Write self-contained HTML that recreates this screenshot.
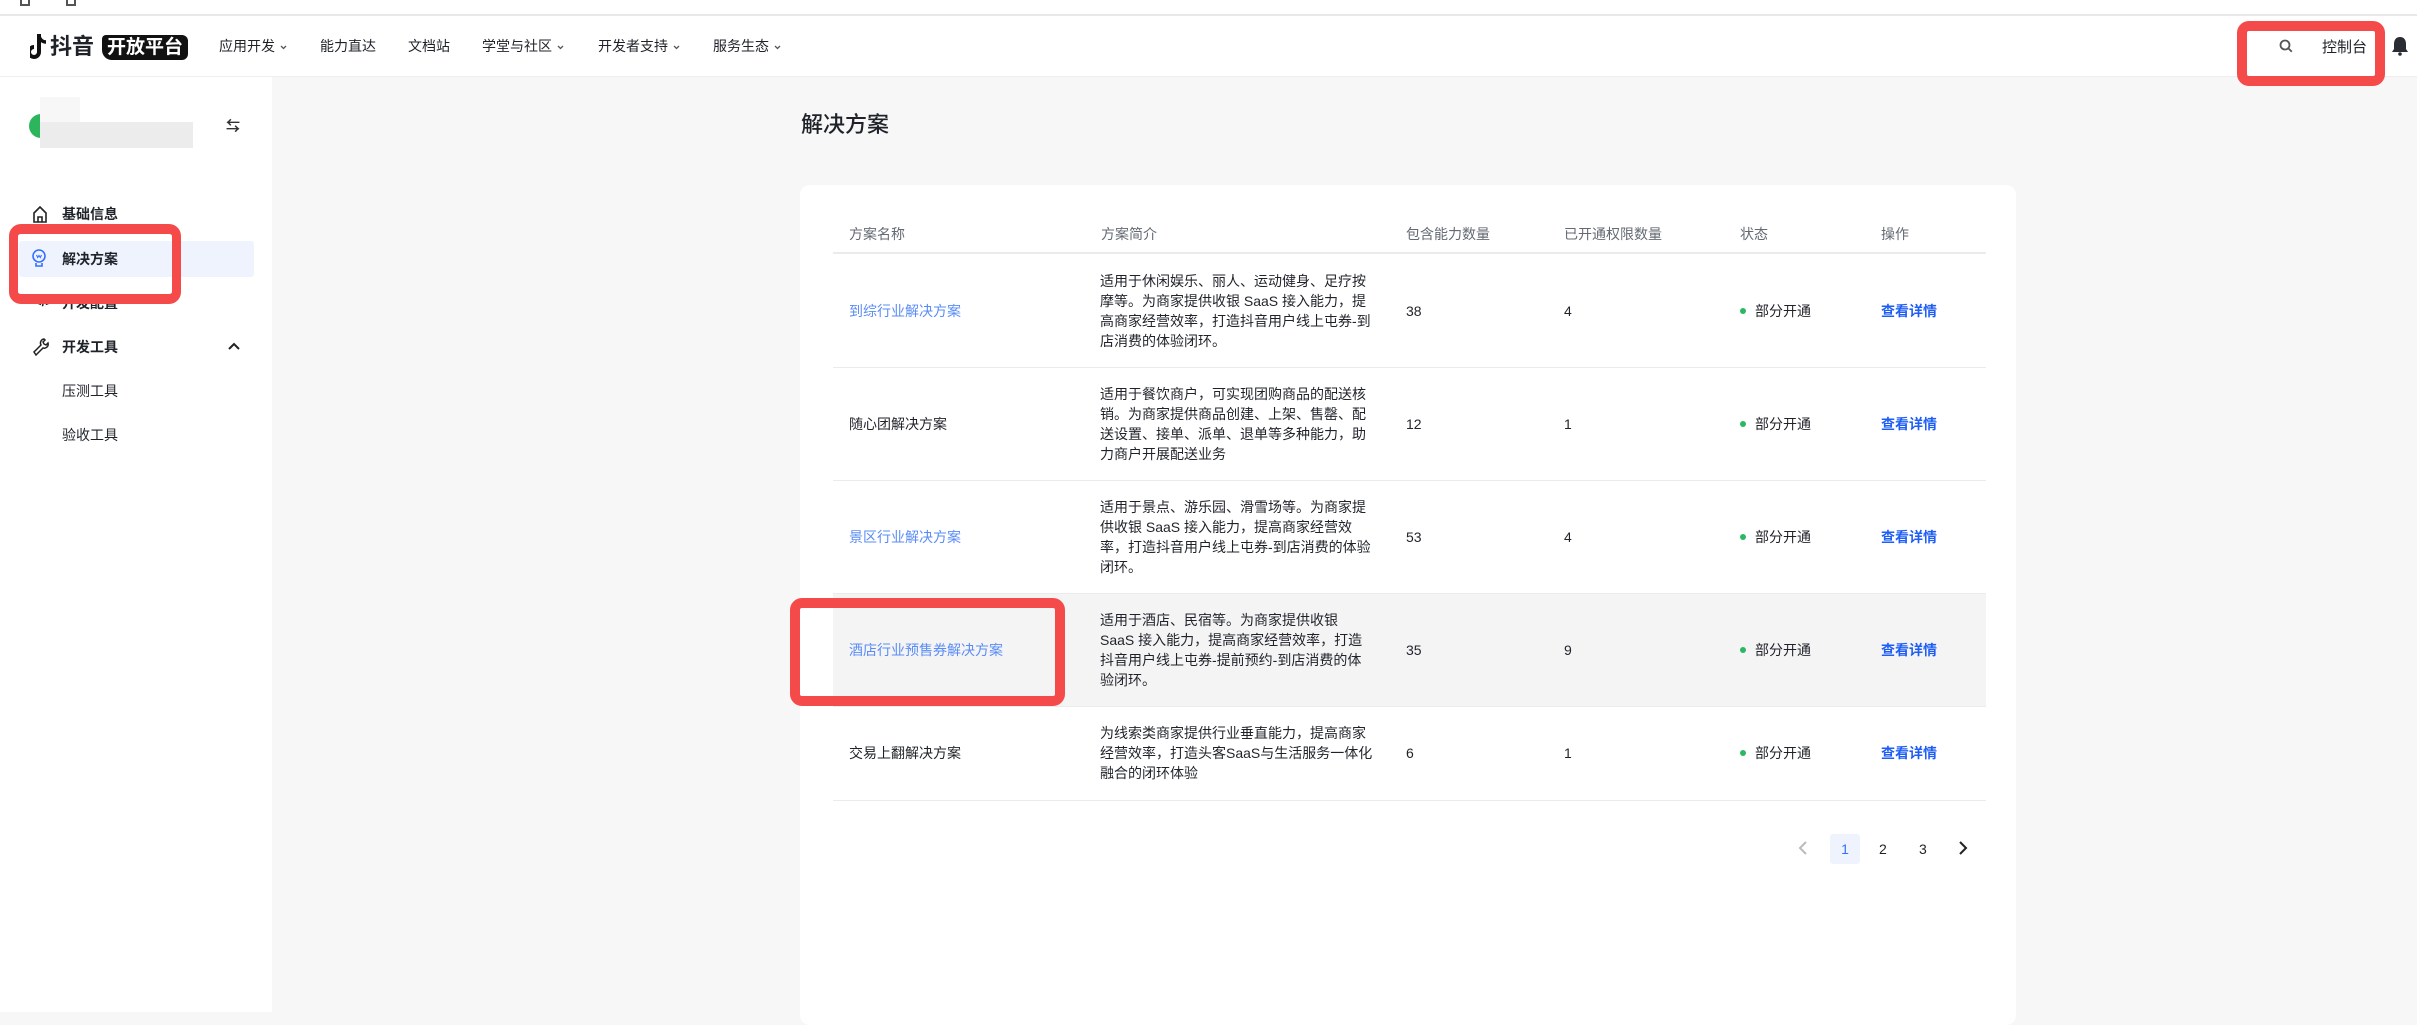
<!DOCTYPE html>
<html><head><meta charset="utf-8"><style>
*{margin:0;padding:0;box-sizing:border-box}
body{width:2417px;height:1012px;position:relative;overflow:hidden;background:#f7f7f8;font-family:"Liberation Sans","Noto Sans CJK SC",sans-serif;color:#1f2329;font-size:14px}
.a{position:absolute;white-space:nowrap}
.top{left:0;top:0;width:2417px;height:16px;background:#fff;border-bottom:2px solid #e8e8e8}
.hdr{left:0;top:16px;width:2417px;height:61px;background:#fff;border-bottom:1px solid #eee}
.nav{top:36px;font-size:14px;color:#1f2329}
.nav svg{margin-left:5px;vertical-align:middle}
.side{left:0;top:77px;width:272px;height:935px;background:#fff}
.mi{left:62px;font-size:14px;font-weight:bold;line-height:20px}
.si{left:62px;font-size:14px;line-height:20px}
.card{left:800px;top:185px;width:1216px;height:840px;background:#fff;border-radius:10px}
.th{top:224px;font-size:14px;color:#646a73}
.line{left:833px;width:1153px;height:1px;background:#ebebeb}
.desc{left:1100px;font-size:14px;line-height:20px;color:#1f2329}
.cell{font-size:14px;line-height:20px}
.lk{color:#5a8cf5}
.op{color:#1e5ef5;font-weight:bold}
.dot{width:6px;height:6px;border-radius:3px;background:#2cb765}
.red{border:10px solid #f44a4a;border-radius:12px}
</style></head><body>
<div class="a top"></div>
<div class="a" style="left:20px;top:0;width:10px;height:6px;border:2px solid #555;border-top:none"></div>
<div class="a" style="left:66px;top:0;width:10px;height:6px;border:2px solid #555;border-top:none"></div>
<div class="a hdr"></div>
<svg class="a" style="left:30px;top:33px" width="18" height="28" viewBox="0 0 18 28"><path d="M9 1v18a5 5 0 1 1-5-5" fill="none" stroke="#111" stroke-width="4"/><path d="M9 3c1 4 4 6 7 6" fill="none" stroke="#111" stroke-width="3.5"/></svg>
<div class="a" style="left:50px;top:33px;font-size:22px;font-weight:bold;line-height:28px">抖音</div>
<div class="a" style="left:102px;top:35px;width:86px;height:25px;background:#111;border-radius:4px 6px 6px 10px;color:#fff;font-size:19px;font-weight:bold;line-height:25px;text-align:center">开放平台</div>
<div class="a nav" style="left:219px">应用开发<svg width="7" height="5" viewBox="0 0 7 5"><path d="M1 1l2.5 2.5L6 1" fill="none" stroke="#555" stroke-width="1.3"/></svg></div>
<div class="a nav" style="left:320px">能力直达</div>
<div class="a nav" style="left:408px">文档站</div>
<div class="a nav" style="left:482px">学堂与社区<svg width="7" height="5" viewBox="0 0 7 5"><path d="M1 1l2.5 2.5L6 1" fill="none" stroke="#555" stroke-width="1.3"/></svg></div>
<div class="a nav" style="left:598px">开发者支持<svg width="7" height="5" viewBox="0 0 7 5"><path d="M1 1l2.5 2.5L6 1" fill="none" stroke="#555" stroke-width="1.3"/></svg></div>
<div class="a nav" style="left:713px">服务生态<svg width="7" height="5" viewBox="0 0 7 5"><path d="M1 1l2.5 2.5L6 1" fill="none" stroke="#555" stroke-width="1.3"/></svg></div>
<svg class="a" style="left:2279px;top:39px" width="14" height="14" viewBox="0 0 14 14"><circle cx="6" cy="6" r="4.5" fill="none" stroke="#555" stroke-width="1.8"/><path d="M9.3 9.3l3.5 3.5" stroke="#555" stroke-width="1.8"/></svg>
<div class="a" style="left:2322px;top:36px;font-size:15px">控制台</div>
<svg class="a" style="left:2391px;top:36px" width="18" height="20" viewBox="0 0 18 20"><path d="M9 1c-4 0-6 3-6 7v5l-2 3h16l-2-3V8c0-4-2-7-6-7z" fill="#2a2d33"/><circle cx="9" cy="18" r="1.8" fill="#2a2d33"/></svg>
<div class="a red" style="left:2237px;top:21px;width:148px;height:65px"></div>
<div class="a side"></div>
<div class="a" style="left:29px;top:114px;width:24px;height:24px;border-radius:12px;background:#2db55d"></div>
<div class="a" style="left:40px;top:97px;width:40px;height:26px;background:#f7f7f7"></div>
<div class="a" style="left:40px;top:122px;width:153px;height:26px;background:#ececec"></div>
<div class="a" style="left:226px;top:116px;font-size:14px;color:#333;font-weight:bold">⇆</div>
<svg class="a" style="left:32px;top:205px" width="16" height="18" viewBox="0 0 16 18"><path d="M2 8L8 2l6 6v9H2z M6 17v-5h4v5" fill="none" stroke="#222" stroke-width="1.6"/></svg>
<div class="a mi" style="top:204px">基础信息</div>
<div class="a" style="left:19px;top:241px;width:235px;height:36px;background:#eef3fe;border-radius:3px"></div>
<svg class="a" style="left:31px;top:249px" width="16" height="20" viewBox="0 0 16 20"><circle cx="8" cy="7" r="6" fill="none" stroke="#3370ff" stroke-width="1.6"/><path d="M5 14v3h6v-3" fill="none" stroke="#3370ff" stroke-width="1.6"/><path d="M5.5 6l1.2 2.5L8 6.5l1.3 2L10.5 6" fill="none" stroke="#3370ff" stroke-width="1.1"/></svg>
<div class="a mi" style="top:249px">解决方案</div>
<div class="a" style="left:34px;top:294px;font-size:13px;font-weight:bold">&lt;/&gt;</div>
<div class="a mi" style="top:293px">开发配置</div>
<div class="a red" style="left:9px;top:224px;width:172px;height:80px;border-width:10px 9px"></div>
<svg class="a" style="left:32px;top:337px" width="18" height="20" viewBox="0 0 18 20"><path d="M12 2a4 4 0 0 0-3 6L2 15l2 3 7-7a4 4 0 0 0 5-5l-2 2-2-1-1-2 2-2z" fill="none" stroke="#222" stroke-width="1.5"/></svg>
<div class="a mi" style="top:337px">开发工具</div>
<svg class="a" style="left:228px;top:342px" width="12" height="8" viewBox="0 0 12 8"><path d="M1 7l5-5 5 5" fill="none" stroke="#222" stroke-width="2"/></svg>
<div class="a si" style="top:381px">压测工具</div>
<div class="a si" style="top:425px">验收工具</div>
<div class="a" style="left:801px;top:107px;font-size:22px;font-weight:500">解决方案</div>
<div class="a card"></div>
<div class="a th" style="left:849px">方案名称</div>
<div class="a th" style="left:1101px">方案简介</div>
<div class="a th" style="left:1406px">包含能力数量</div>
<div class="a th" style="left:1564px">已开通权限数量</div>
<div class="a th" style="left:1740px">状态</div>
<div class="a th" style="left:1881px">操作</div>
<div class="a line" style="top:252px;height:2px"></div>
<div class="a line" style="top:367px"></div>
<div class="a line" style="top:480px"></div>
<div class="a" style="left:833px;top:594px;width:1153px;height:112px;background:#f4f4f5"></div>
<div class="a line" style="top:593px"></div>
<div class="a line" style="top:706px"></div>
<div class="a line" style="top:800px"></div>
<div class="a cell lk" style="left:849px;top:301px">到综行业解决方案</div>
<div class="a desc" style="top:271px">适用于休闲娱乐、丽人、运动健身、足疗按<br>摩等。为商家提供收银 SaaS 接入能力，提<br>高商家经营效率，打造抖音用户线上屯券-到<br>店消费的体验闭环。</div>
<div class="a cell" style="left:1406px;top:301px">38</div>
<div class="a cell" style="left:1564px;top:301px">4</div>
<div class="a dot" style="left:1740px;top:308px"></div>
<div class="a cell" style="left:1755px;top:301px">部分开通</div>
<div class="a cell op" style="left:1881px;top:301px">查看详情</div>
<div class="a cell" style="left:849px;top:414px">随心团解决方案</div>
<div class="a desc" style="top:384px">适用于餐饮商户，可实现团购商品的配送核<br>销。为商家提供商品创建、上架、售罄、配<br>送设置、接单、派单、退单等多种能力，助<br>力商户开展配送业务</div>
<div class="a cell" style="left:1406px;top:414px">12</div>
<div class="a cell" style="left:1564px;top:414px">1</div>
<div class="a dot" style="left:1740px;top:421px"></div>
<div class="a cell" style="left:1755px;top:414px">部分开通</div>
<div class="a cell op" style="left:1881px;top:414px">查看详情</div>
<div class="a cell lk" style="left:849px;top:527px">景区行业解决方案</div>
<div class="a desc" style="top:497px">适用于景点、游乐园、滑雪场等。为商家提<br>供收银 SaaS 接入能力，提高商家经营效<br>率，打造抖音用户线上屯券-到店消费的体验<br>闭环。</div>
<div class="a cell" style="left:1406px;top:527px">53</div>
<div class="a cell" style="left:1564px;top:527px">4</div>
<div class="a dot" style="left:1740px;top:534px"></div>
<div class="a cell" style="left:1755px;top:527px">部分开通</div>
<div class="a cell op" style="left:1881px;top:527px">查看详情</div>
<div class="a cell lk" style="left:849px;top:640px">酒店行业预售券解决方案</div>
<div class="a desc" style="top:610px">适用于酒店、民宿等。为商家提供收银<br>SaaS 接入能力，提高商家经营效率，打造<br>抖音用户线上屯券-提前预约-到店消费的体<br>验闭环。</div>
<div class="a cell" style="left:1406px;top:640px">35</div>
<div class="a cell" style="left:1564px;top:640px">9</div>
<div class="a dot" style="left:1740px;top:647px"></div>
<div class="a cell" style="left:1755px;top:640px">部分开通</div>
<div class="a cell op" style="left:1881px;top:640px">查看详情</div>
<div class="a red" style="left:790px;top:598px;width:275px;height:108px"></div>
<div class="a cell" style="left:849px;top:743px">交易上翻解决方案</div>
<div class="a desc" style="top:723px">为线索类商家提供行业垂直能力，提高商家<br>经营效率，打造头客SaaS与生活服务一体化<br>融合的闭环体验</div>
<div class="a cell" style="left:1406px;top:743px">6</div>
<div class="a cell" style="left:1564px;top:743px">1</div>
<div class="a dot" style="left:1740px;top:750px"></div>
<div class="a cell" style="left:1755px;top:743px">部分开通</div>
<div class="a cell op" style="left:1881px;top:743px">查看详情</div>
<svg class="a" style="left:1798px;top:841px" width="10" height="14" viewBox="0 0 10 14"><path d="M8 1L2 7l6 6" fill="none" stroke="#bbb" stroke-width="2"/></svg>
<div class="a" style="left:1830px;top:834px;width:30px;height:30px;background:#eef3fe;border-radius:3px;color:#3370ff;font-size:14px;line-height:30px;text-align:center">1</div>
<div class="a cell" style="left:1879px;top:839px">2</div>
<div class="a cell" style="left:1919px;top:839px">3</div>
<svg class="a" style="left:1958px;top:841px" width="10" height="14" viewBox="0 0 10 14"><path d="M2 1l6 6-6 6" fill="none" stroke="#222" stroke-width="2"/></svg>
</body></html>
